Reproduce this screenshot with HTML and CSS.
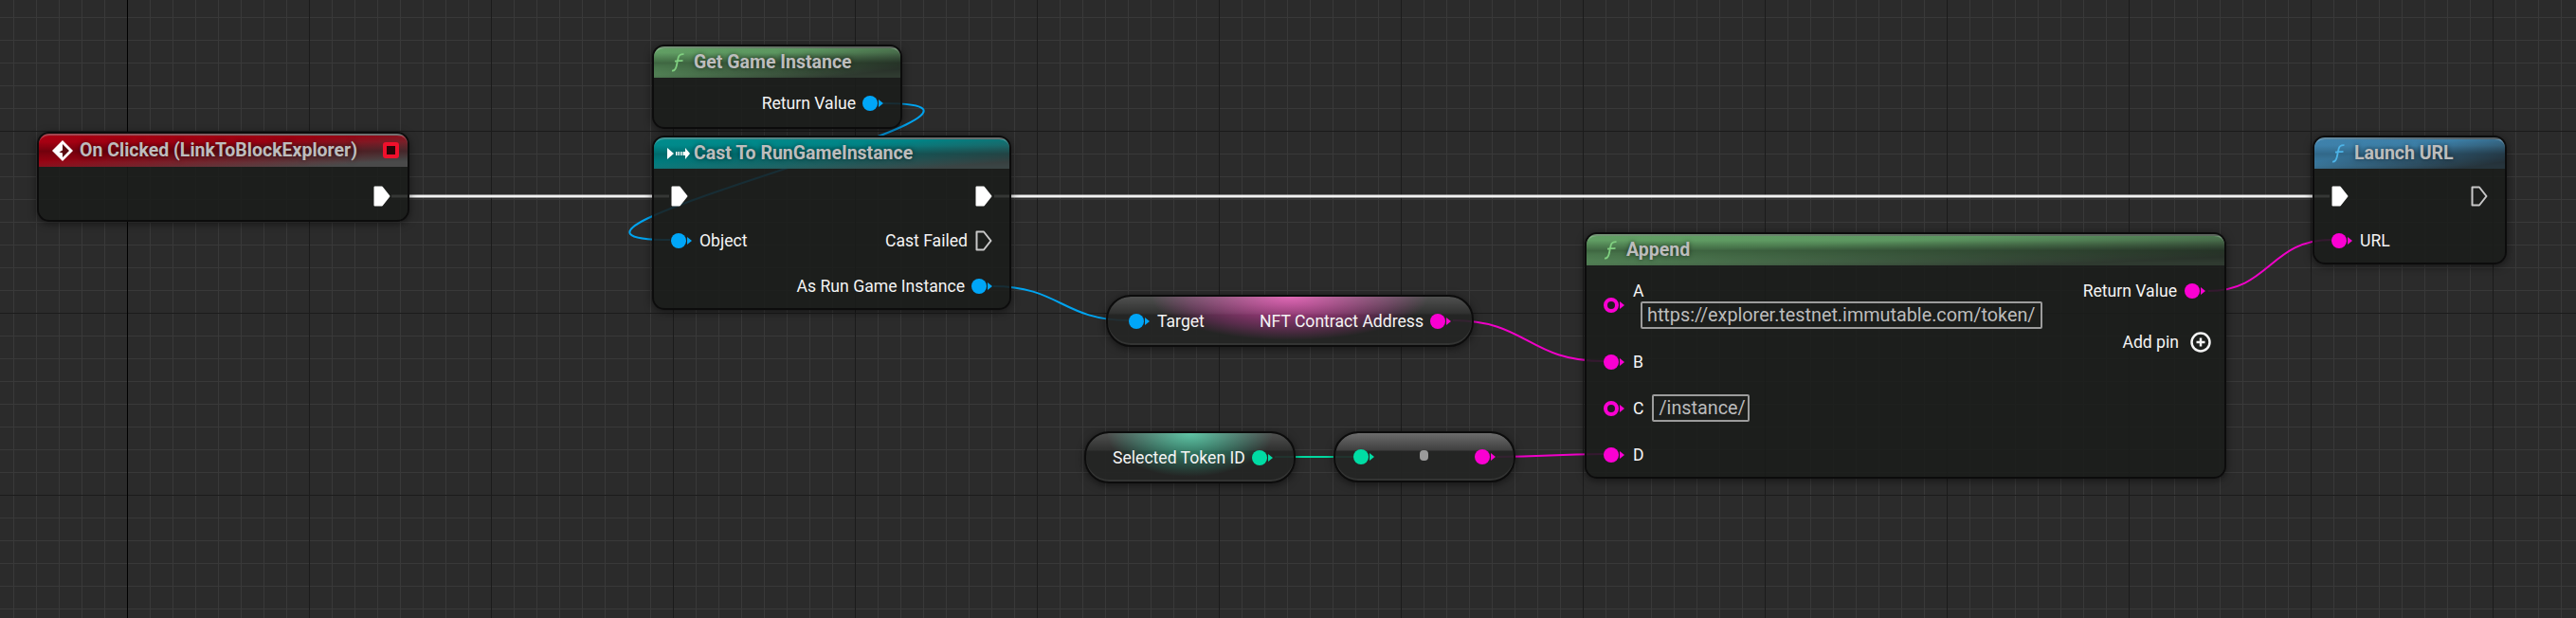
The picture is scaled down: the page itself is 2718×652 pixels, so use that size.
FILE: index.html
```html
<!DOCTYPE html>
<html lang="en">
<head>
    <meta charset="UTF-8">
    <title>Blueprint Graph</title>
    <link rel="stylesheet" href="styles.css">
</head>
<body>
<div class="graph">
    <svg class="defs" width="0" height="0">
        <symbol id="exec" viewBox="0 0 18 22">
            <path d="M1.5 1.5H9L16.5 11L9 20.5H1.5Z"/>
        </symbol>
        <symbol id="func" viewBox="0 0 16 20">
            <path d="M1 18.5C4 19 5 17 5.8 13.5L7.6 5C8.3 2 9.6 1 13.5 1.2M4 8.6C7 8.2 9 8.2 12.5 7.8"/>
        </symbol>
    </svg>

    <!-- wires sit under the nodes, nodes are slightly see through -->
    <svg class="wires" width="2718" height="652">
        <path class="wire wire-exec" d="M413 207H706"/>
        <path class="wire wire-exec" d="M1049 207H2458"/>
        <path class="wire wire-blue" d="M932 109C1142 109 497 253 707 253"/>
        <path class="wire wire-blue" d="M1048 302C1118 302 1121 338 1191 338"/>
        <path class="wire wire-pink" d="M1533 338C1612 338 1612 381 1692 381"/>
        <path class="wire wire-green" d="M1345 482H1428"/>
        <path class="wire wire-pink" d="M1579 482C1635 482 1635 479 1692 479"/>
        <path class="wire wire-pink" d="M2330 307C2395 307 2395 253 2460 253"/>
    </svg>

    <div class="node node-click">
        <div class="header header-red">
            <svg class="icon-event" viewBox="0 0 22 22">
                <path class="diamond-out" d="M11 0L22 11L11 22L0 11Z"/>
                <path class="diamond-in" d="M11 4L18 11L11 18V13.5L7.5 12.5L11 10.5Z"/>
            </svg>
            <span class="title">On Clicked (LinkToBlockExplorer)</span>
            <span class="delegate"></span>
        </div>
        <div class="row row-end">
            <svg class="exec"><use href="#exec"/></svg>
        </div>
    </div>

    <div class="node node-get">
        <div class="header header-green">
            <svg class="icon-func func-green"><use href="#func"/></svg>
            <span class="title">Get Game Instance</span>
        </div>
        <div class="row row-end">
            <span class="label">Return Value</span>
            <span class="pin pin-blue"></span>
        </div>
    </div>

    <div class="node node-cast">
        <div class="header header-teal">
            <svg class="icon-cast" viewBox="0 0 24 12">
                <path d="M0 0L7 6L0 12Z"/>
                <path d="M9 4h1.5v4H9ZM11.5 4h1.5v4h-1.5ZM14 4h1.5v4H14ZM16.5 4h2.5V0L24 6L19 12V8h-2.5Z"/>
            </svg>
            <span class="title">Cast To RunGameInstance</span>
        </div>
        <div class="row">
            <svg class="exec"><use href="#exec"/></svg>
            <svg class="exec"><use href="#exec"/></svg>
        </div>
        <div class="row">
            <span class="side">
                <span class="pin pin-blue"></span>
                <span class="label">Object</span>
            </span>
            <span class="side">
                <span class="label">Cast Failed</span>
                <svg class="exec exec-hollow"><use href="#exec"/></svg>
            </span>
        </div>
        <div class="row row-end">
            <span class="label">As Run Game Instance</span>
            <span class="pin pin-blue"></span>
        </div>
    </div>

    <div class="pill pill-target">
        <span class="side">
            <span class="pin pin-blue"></span>
            <span class="label">Target</span>
        </span>
        <span class="side">
            <span class="label">NFT Contract Address</span>
            <span class="pin pin-pink"></span>
        </span>
    </div>

    <div class="pill pill-token">
        <span class="label">Selected Token ID</span>
        <span class="pin pin-green"></span>
    </div>

    <div class="pill pill-convert">
        <span class="pin pin-green"></span>
        <span class="convert-dot"></span>
        <span class="pin pin-pink"></span>
    </div>

    <div class="node node-append">
        <div class="header header-green">
            <svg class="icon-func func-green"><use href="#func"/></svg>
            <span class="title">Append</span>
        </div>
        <div class="append-body">
            <div class="append-inputs">
                <div class="side side-a">
                    <span class="pin pin-pink pin-hollow"></span>
                    <div class="stack">
                        <span class="label">A</span>
                        <span class="text-box">https://explorer.testnet.immutable.com/token/</span>
                    </div>
                </div>
                <div class="row-left">
                    <span class="pin pin-pink"></span>
                    <span class="label">B</span>
                </div>
                <div class="row-left">
                    <span class="pin pin-pink pin-hollow"></span>
                    <span class="label">C</span>
                    <span class="text-box">/instance/</span>
                </div>
                <div class="row-left">
                    <span class="pin pin-pink"></span>
                    <span class="label">D</span>
                </div>
            </div>
            <div class="append-outputs">
                <div class="row-right">
                    <span class="label">Return Value</span>
                    <span class="pin pin-pink"></span>
                </div>
                <div class="row-right row-add">
                    <span class="label">Add pin</span>
                    <svg class="icon-add" viewBox="0 0 22 22">
                        <circle cx="11" cy="11" r="9.5"/>
                        <path d="M11 6.5V15.5M6.5 11H15.5"/>
                    </svg>
                </div>
            </div>
        </div>
    </div>

    <div class="node node-launch">
        <div class="header header-blue">
            <svg class="icon-func func-blue"><use href="#func"/></svg>
            <span class="title">Launch URL</span>
        </div>
        <div class="row">
            <svg class="exec"><use href="#exec"/></svg>
            <svg class="exec exec-hollow"><use href="#exec"/></svg>
        </div>
        <div class="row">
            <span class="side">
                <span class="pin pin-pink"></span>
                <span class="label">URL</span>
            </span>
        </div>
    </div>
</div>
</body>
</html>
```

FILE: styles.css
```css
body {
    margin: 0;
    overflow: hidden;
    background-color: #2b2b2b;
    font-family: Roboto, "Liberation Sans", sans-serif;
}
.graph {
    position: relative;
    width: 2718px;
    height: 652px;
    background-color: #2b2b2b;
    background-image:
        linear-gradient(to right, #000 1px, transparent 1px),
        linear-gradient(to right, #1b1b1b 1px, transparent 1px),
        linear-gradient(to bottom, #1b1b1b 1px, transparent 1px),
        linear-gradient(to right, #393939 1px, transparent 1px),
        linear-gradient(to bottom, #393939 1px, transparent 1px);
    background-size: 1px 100%, 192px 192px, 192px 192px, 24px 24px, 24px 24px;
    background-position: 134px 0, 134px 0, 0 138px, 14px 0, 0 18px;
    background-repeat: no-repeat, repeat, repeat, repeat, repeat;
}
.defs {
    position: absolute;
}

/* wires */
.wires {
    position: absolute;
    left: 0;
    top: 0;
}
.wire {
    fill: none;
    stroke-width: 2;
}
.wire-exec {
    stroke: #f2f2f2;
    stroke-width: 3;
}
.wire-blue {
    stroke: #00a4f0;
}
.wire-pink {
    stroke: #f000c8;
}
.wire-green {
    stroke: #00d8a0;
}

/* nodes */
.node, .pill {
    position: absolute;
    box-sizing: border-box;
    border: 2px solid #0c0c0c;
    box-shadow: 0 2px 8px rgba(0, 0, 0, 0.5);
    color: #fff;
}
.node {
    border-radius: 13px;
    background-color: rgba(26, 28, 26, 0.88);
    background-clip: padding-box;
}
.node-click {
    left: 39px;
    top: 139px;
    width: 393px;
    height: 95px;
}
.node-get {
    left: 688px;
    top: 47px;
    width: 264px;
    height: 89px;
}
.node-cast {
    left: 688px;
    top: 143px;
    width: 379px;
    height: 184px;
}
.node-append {
    left: 1672px;
    top: 245px;
    width: 677px;
    height: 260px;
}
.node-launch {
    left: 2440px;
    top: 143px;
    width: 205px;
    height: 136px;
}

.header {
    display: flex;
    align-items: center;
    height: 33px;
    padding-left: 18px;
    padding-bottom: 2px;
    border-radius: 11px 11px 0 0;
    border-top: 2px solid rgba(255, 255, 255, 0.22);
    box-sizing: border-box;
    margin-bottom: 3px;
}
.node-click .header {
    height: 35px;
    margin-bottom: 7px;
}
.node-cast .header, .node-launch .header {
    margin-bottom: 5px;
}
.header-red {
    background-image: linear-gradient(to bottom, transparent 20%, rgba(0, 0, 0, 0.28) 50%, transparent 85%), linear-gradient(to bottom right, #aa0012 0, #9a0212 40%, #4a4a4a 88%);
}
.header-green {
    background-image: linear-gradient(to bottom, transparent 15%, rgba(0, 0, 0, 0.32) 50%, transparent 90%), linear-gradient(to bottom right, #62a064 0, #5c9660 32%, #2f3a30 85%);
}
.header-teal {
    background-image: linear-gradient(to bottom, transparent 20%, rgba(0, 0, 0, 0.2) 50%, transparent 90%), linear-gradient(to bottom right, #008c8c 0, #008486 38%, #3a4444 88%);
}
.header-blue {
    background-image: linear-gradient(to bottom, transparent 20%, rgba(0, 0, 0, 0.18) 50%, transparent 90%), linear-gradient(to bottom right, #3f82ac 0, #3c7ea6 38%, #26343c 88%);
}
.title {
    font-size: 19.5px;
    font-weight: 700;
    line-height: 20px;
    color: #bdbdbd;
    text-shadow: 0 0 5px rgba(0, 0, 0, 0.55);
    white-space: nowrap;
}
.icon-func {
    width: 16px;
    height: 20px;
    margin-right: 8px;
    fill: none;
    stroke-width: 1.8;
    stroke: currentColor;
}
.func-green {
    color: #80d080;
}
.func-blue {
    color: #4cb4e8;
}
.icon-event {
    width: 22px;
    height: 22px;
    margin-right: 7px;
    margin-left: -4px;
}
.diamond-out {
    fill: #fff;
}
.diamond-in {
    fill: #5a0a10;
}
.delegate {
    box-sizing: border-box;
    width: 17px;
    height: 17px;
    margin-left: auto;
    margin-right: 9px;
    border: 4px solid #f0102c;
    border-radius: 3px;
    background-color: #2a0508;
}
.icon-cast {
    width: 24px;
    height: 12px;
    margin-right: 4px;
    margin-left: -4px;
    fill: #fff;
}

/* rows and pins */
.row {
    display: flex;
    align-items: center;
    justify-content: space-between;
    height: 47.5px;
    padding: 0 18px;
}
.row-end {
    justify-content: flex-end;
}
.side, .row-left, .row-right {
    display: flex;
    align-items: center;
}
.label {
    font-size: 17.6px;
    line-height: 20px;
    white-space: nowrap;
    color: #f4f4f4;
}
.row-end .label {
    margin-right: 7px;
}
.pin {
    position: relative;
    flex: none;
    box-sizing: border-box;
    width: 16px;
    height: 16px;
    margin-right: 6px;
    border-radius: 50%;
    background-color: currentColor;
}
.pin::after {
    content: "";
    position: absolute;
    top: 50%;
    right: -6px;
    margin-top: -4px;
    border-left: 5px solid currentColor;
    border-top: 4px solid transparent;
    border-bottom: 4px solid transparent;
}
.pin-blue {
    color: #00a6f8;
}
.pin-pink {
    color: #fa00d2;
}
.pin-green {
    color: #00dca4;
}
.pin-hollow {
    border: 4px solid currentColor;
    background-color: #221d22;
}
.pin-hollow::after {
    right: -10px;
}
.exec {
    width: 18px;
    height: 22px;
    fill: #fff;
    stroke: #fff;
    stroke-width: 2;
    stroke-linejoin: round;
}
.exec-hollow {
    fill: none;
    stroke: #c8c8c8;
}
.row .side .label, .pill .side .label {
    margin: 0 8px 0 8px;
}

/* pure nodes */
.pill {
    display: flex;
    align-items: center;
    justify-content: space-between;
    height: 55px;
    padding: 0 22px;
    border-radius: 26px;
    background-color: rgba(36, 37, 36, 0.92);
    background-clip: padding-box;
    box-shadow: 0 2px 8px rgba(0, 0, 0, 0.5), inset 0 -2px 0 rgba(255, 255, 255, 0.07);
}
.pill-target {
    left: 1167px;
    top: 311px;
    width: 388px;
    background-image:
        linear-gradient(to bottom, rgba(255, 255, 255, 0.2) 0, rgba(255, 255, 255, 0.05) 18px, transparent 19px),
        radial-gradient(ellipse 38% 90% at 50% 0, rgba(224, 70, 170, 0.95), rgba(200, 60, 160, 0.3) 75%, transparent);
}
.pill-target .side:last-child .label {
    margin-right: 7px;
}
.pill-token {
    left: 1144px;
    top: 455px;
    width: 223px;
    padding-left: 28px;
    background-image:
        linear-gradient(to bottom, rgba(255, 255, 255, 0.2) 0, rgba(255, 255, 255, 0.05) 18px, transparent 19px),
        radial-gradient(ellipse 40% 90% at 50% 0, rgba(60, 190, 150, 0.95), rgba(50, 160, 130, 0.3) 75%, transparent);
}
.pill-convert {
    left: 1407px;
    top: 455px;
    width: 192px;
    height: 54px;
    padding: 0 19px;
    background-image: linear-gradient(to bottom, #6c6c6c 0, #3f3f3f 18px, transparent 19px);
}
.convert-dot {
    width: 9px;
    height: 11px;
    margin-top: -4px;
    margin-left: -1px;
    border-radius: 4px;
    background-color: #9a9a9a;
}

/* append body */
.append-body {
    display: flex;
    justify-content: space-between;
}
.append-inputs {
    padding-left: 18px;
}
.side-a {
    padding: 14px 0 10px;
}
.stack {
    display: flex;
    flex-direction: column;
    align-items: flex-start;
    margin-left: 9px;
}
.stack .text-box {
    margin-left: 8px;
    margin-top: 1px;
}
.row-left {
    height: 49px;
}
.row-left .label {
    margin-left: 9px;
}
.text-box {
    box-sizing: border-box;
    height: 29px;
    padding: 0 6px 0 5px;
    border: 2px solid #9c9c9c;
    border-radius: 2px;
    font-size: 19.8px;
    line-height: 25px;
    white-space: nowrap;
    color: #bcbcbc;
}
.row-left .text-box {
    margin-left: 9px;
    padding-right: 2px;
}
.append-outputs {
    padding-right: 14px;
}
.row-right {
    justify-content: flex-end;
    height: 48px;
    padding-right: 6px;
}
.row-right .label {
    margin-right: 8px;
}
.row-add {
    margin-top: 6px;
    padding-right: 0;
}
.row-add .label {
    margin-right: 12px;
}
.icon-add {
    width: 22px;
    height: 22px;
    fill: none;
    stroke: #f4f4f4;
    stroke-width: 2.5;
}
```
